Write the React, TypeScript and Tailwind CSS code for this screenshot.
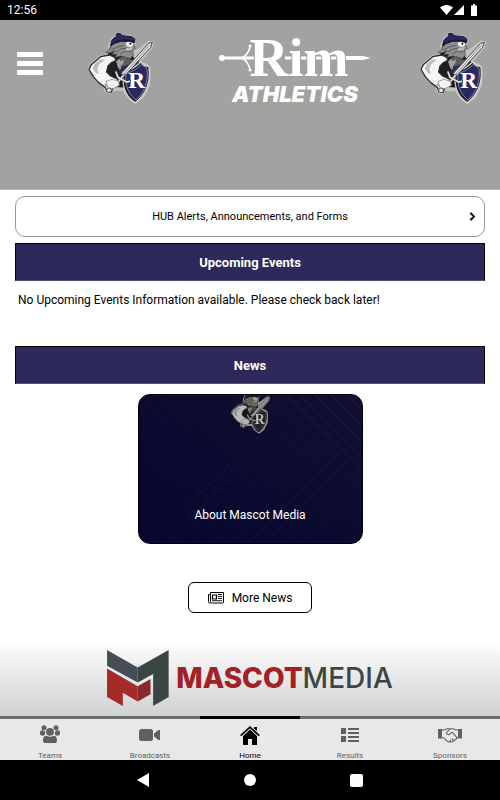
import type { ReactNode } from "react";
import { FaChevronRight } from "react-icons/fa";

function Mascot({ className }: { className: string }) {
  return (
    <svg viewBox="24 22 198 216" className={className} aria-hidden="true">
      {/* pale halo */}
      <g fill="#c2c2c0" stroke="#c2c2c0" strokeWidth="6" strokeLinejoin="round">
        <path d="M88 60 98 40 107 35 109 27 120 25 124 33 150 35 165 48 161 66 164 84 208 51 219 53 215 68 178 112 200 120 209 134 207 182 190 216 166 234 148 222 130 196 100 196 88 205 74 198 75 184 54 170 26 132 34 118 62 94 86 90Z" />
      </g>
      {/* torso */}
      <path
        d="M60 96 84 90 90 66 158 72 160 98 178 112 150 190 98 186 66 160Z"
        fill="#1b1b20"
      />
      <path d="M108 108 128 94 150 104 164 108 140 140 118 140Z" fill="#5c5c60" />
      <path d="M124 126 172 112 158 136 132 156 116 146Z" fill="#2b2a5c" />
      <path d="m108 112 10-10 4 8 10-6-2 12-8 8 2 10-10-4Z" fill="#a2a2a2" />
      {/* arm */}
      <path
        d="M62 96 88 91 105 98 107 108 94 114 84 124 80 142 92 154 114 164 118 182 98 190 94 202 80 200 76 188 56 174 40 156 27 134 34 120Z"
        fill="#f5f5f5"
        stroke="#303033"
        strokeWidth="4"
        strokeLinejoin="round"
      />
      <path d="M62 104 44 118 38 132 48 146 56 148 52 132 58 118 74 106Z" fill="#bdbdbd" />
      <path d="m74 178 10 8 12-2m-8 14 2-12" stroke="#8f8f8f" strokeWidth="4" fill="none" />
      <path d="M82 140 92 122 110 114 118 152 96 150Z" fill="#1f1f23" />
      {/* head and beard */}
      <path
        d="M96 56 90 72 78 84 92 84 104 78 96 90 110 88 106 98 124 94 150 102 160 92 158 76 166 72 158 50 128 44Z"
        fill="#8e8e8c"
        stroke="#4a4a4a"
        strokeWidth="2"
      />
      <path
        d="m94 76 20-10 20-4m-28 20 20-10 24-2m-30 18 16-8 18 2m-22 14 14 4"
        stroke="#5e5e5e"
        strokeWidth="3"
        fill="none"
      />
      <ellipse cx="149" cy="58" rx="11" ry="8" fill="#f8f8f8" />
      <circle cx="151" cy="57" r="3" fill="#111" />
      <path d="m138 70 20-3-2 8-18 4Z" fill="#bcbcba" />
      {/* bonnet */}
      <path
        d="M92 64 95 48 104 38 126 33 154 36 165 44 163 54 146 50 122 50 104 56Z"
        fill="#2b2a64"
        stroke="#14142c"
        strokeWidth="3"
      />
      <path d="M94 60C106 46 132 42 163 50" stroke="#14142c" strokeWidth="3" fill="none" />
      <ellipse cx="116" cy="31" rx="9" ry="7" fill="#26264f" />
      {/* shield */}
      <path
        d="M130 142C148 138 168 126 182 112L192 122 207 126C212 168 202 206 166 234 142 220 124 190 130 142Z"
        fill="#17171f"
        stroke="#d4d4d2"
        strokeWidth="4"
      />
      <path
        d="M138 146C156 142 172 132 184 119L201 131C205 168 196 200 168 226 146 210 134 184 138 146Z"
        fill="#2a2963"
        stroke="#bdbdc6"
        strokeWidth="2"
      />
      <text
        x="170"
        y="190"
        fontSize="70"
        textAnchor="middle"
        className="fill-white font-['Liberation_Serif'] font-bold"
      >
        R
      </text>
      {/* sword */}
      <path d="M217 53 206 56 124 146 132 156 212 68Z" fill="#e3e3e3" stroke="#4a4a4a" strokeWidth="3" />
      <path d="M208 62 132 148" stroke="#8d8d8d" strokeWidth="3" />
      <path
        d="m108 142 6 16 26 14 8-2m-18-18-20 26"
        stroke="#353537"
        strokeWidth="9"
        fill="none"
        strokeLinecap="round"
      />
      <path
        d="m108 142 6 16 26 14 8-2m-18-18-20 26"
        stroke="#e0e0e0"
        strokeWidth="5"
        fill="none"
        strokeLinecap="round"
      />
      <path
        d="M78 170 96 164 116 170 118 182 100 192 84 190Z"
        fill="#f3f3f3"
        stroke="#77777a"
        strokeWidth="2"
      />
      <circle cx="87" cy="197" r="7" fill="#e8e8e8" stroke="#555" strokeWidth="3" />
    </svg>
  );
}

function Wordmark() {
  return (
    <svg
      viewBox="0 -6 152 84"
      className="h-[84px] w-[152px]"
      role="img"
      aria-label="Rim Athletics"
    >
      <g fill="none" stroke="#fff">
        <circle cx="3" cy="26" r="2" fill="#fff" strokeWidth="2" />
        <path d="M5 26h32" strokeWidth="3" />
        <path d="M31 15c-1 5-3 8-8 11 5 3 7 6 8 12" strokeWidth="1.5" />
        <path d="M66 26h65" strokeWidth="3" />
      </g>
      <circle cx="31" cy="14" r="1.500" fill="#fff" />
      <circle cx="31" cy="38" r="1.500" fill="#fff" />
      <path d="M126 24h18l8 2-8 2h-18Z" fill="#fff" />
      <text
        x="80"
        y="44"
        fontSize="54"
        textAnchor="middle"
        stroke="#a2a2a0"
        strokeWidth="2"
        paintOrder="stroke"
        className="fill-white font-['Liberation_Serif'] font-bold"
      >
        Rim
      </text>
      <text
        x="76"
        y="70"
        fontSize="22"
        textAnchor="middle"
        className="fill-white font-['Inter'] font-black italic"
      >
        ATHLETICS
      </text>
    </svg>
  );
}

function StatusBar() {
  return (
    <div className="flex h-5 items-center justify-between bg-black pl-[7px] pr-[22px] text-white">
      <span className="text-xs">12:56</span>
      <svg viewBox="0 0 38 12" className="h-3 w-[38px]" fill="currentColor" aria-hidden="true">
        <path d="M0 3.500C4 0 9 0 13 3.500L6.500 11Z" />
        <path d="M24 1v10H14Z" />
        <path d="M31 1.500h2V0h2v1.500h2V12h-6Z" />
      </svg>
    </div>
  );
}

function SectionHeading({ children }: { children: string }) {
  return (
    <h2 className="flex h-[38px] items-center justify-center border border-black border-b-[#55537c] bg-[#2d2a5b] pt-0.5 text-[13px] font-bold text-white">
      {children}
    </h2>
  );
}

function NewspaperIcon() {
  return (
    <svg viewBox="0 0 16 12" className="h-3 w-4" fill="none" stroke="currentColor" aria-hidden="true">
      <path d="M2.500.5h13v9.500q0 1-1 1h-12M2.500 2.500h-2V9.500q0 1.500 1.200 1.500.8 0 .8-1.500V.5" />
      <path d="M4.500 3h4v4h-4z" strokeWidth="1.200" />
      <path d="M10 2.500h4M10 4.500h4M10 6.500h4M4 8.700h10" strokeWidth=".9" />
    </svg>
  );
}

function TeamsIcon() {
  return (
    <svg viewBox="0 0 20 20" className="h-5 w-5" fill="currentColor" aria-hidden="true">
      <circle cx="4" cy="2.800" r="2.500" />
      <circle cx="16" cy="2.800" r="2.500" />
      <circle cx="2.500" cy="8" r="2.700" />
      <circle cx="17.500" cy="8" r="2.700" />
      <circle cx="10" cy="6.800" r="3.900" />
      <path d="M3 16c0-3.500 1-5.300 3.500-5.300 2 1.300 5 1.300 7 0C16 10.700 17 12.500 17 16c0 1.500-1 2-2 2H5c-1 0-2-.5-2-2Z" />
    </svg>
  );
}

function VideoIcon() {
  return (
    <svg viewBox="0 0 22 14" className="h-3.5 w-[22px]" fill="currentColor" aria-hidden="true">
      <rect y="1" width="14" height="12" rx="2.500" />
      <path d="M15 5.500 19.500 2H21v10h-1.500L15 8.500Z" />
    </svg>
  );
}

function HomeIcon() {
  return (
    <svg viewBox="0 0 20 19" className="h-[19px] w-5" aria-hidden="true">
      <path d="M3 9.500 10 3l7 6.500V19h-5v-6H8v6H3Z" fill="currentColor" />
      <path d="M14 1h3v6l-3-3Z" fill="currentColor" />
      <path d="M.7 9.700 10 1.200l9.300 8.500" fill="none" stroke="#e8e8e8" strokeWidth="3.500" />
      <path d="M.7 9.700 10 1.200l9.300 8.500" fill="none" stroke="currentColor" strokeWidth="1.800" />
    </svg>
  );
}

function ResultsIcon() {
  return (
    <svg viewBox="0 0 18 14" className="h-3.5 w-[18px]" fill="currentColor" aria-hidden="true">
      <path d="M0 0h5v6H0zM0 8h5v6H0zM7 0h11v2H7zM7 4h11v2H7zM7 8h11v2H7zM7 12h11v2H7z" />
    </svg>
  );
}

function HandshakeIcon() {
  return (
    <svg viewBox="0 0 24 15" className="h-[15px] w-6" aria-hidden="true">
      <path d="M0 1h4v9.500H0zM20 1h4v9.500h-4z" fill="currentColor" />
      <path
        d="M4 2h2.500L9 .7h3M20 2h-2.500L15 .7h-2.500L9 4.200C8 6 10 7.500 11.700 6L14 4.200l4.500 5c.8 1-.2 2-1 2-.2 1.300-1.300 2-2.500 1.500-.8 1.300-2 1.500-3 1-1.500.5-2.500 0-3.500-1L5.500 9.700H4M18.500 9.700H20M13 13l-1-1M15.500 12l-1.500-1.500"
        fill="none"
        stroke="currentColor"
        strokeWidth="1.100"
      />
    </svg>
  );
}

const TABS: { label: string; icon: ReactNode; active?: boolean }[] = [
  { label: "Teams", icon: <TeamsIcon /> },
  { label: "Broadcasts", icon: <VideoIcon /> },
  { label: "Home", icon: <HomeIcon />, active: true },
  { label: "Results", icon: <ResultsIcon /> },
  { label: "Sponsors", icon: <HandshakeIcon /> },
];

export default function App() {
  return (
    <div className="flex min-h-screen flex-col bg-white font-['Roboto',sans-serif] text-black">
      <StatusBar />

      <header className="flex h-[170px] items-start border-b border-[#b5b5b3] bg-[#a2a2a0] pl-4 pr-3.5 pt-1.5">
        <button aria-label="Menu" className="mt-[26px] flex w-7 flex-col gap-1 px-px">
          <span className="h-[5px] w-full rounded-[1px] bg-white" />
          <span className="h-[5px] w-full rounded-[1px] bg-white" />
          <span className="h-[5px] w-full rounded-[1px] bg-white" />
        </button>
        <Mascot className="ml-11 mt-1.5 h-[72px] w-[66px]" />
        <div className="flex flex-1 justify-center pl-4">
          <Wordmark />
        </div>
        <Mascot className="mt-1.5 h-[72px] w-[66px]" />
      </header>

      <main className="flex flex-1 flex-col px-[15px] pt-1.5">
        <button className="flex h-[41px] items-center rounded-[10px] border border-[#999] pl-4 pr-[7px] text-[11px]">
          <span className="flex-1 pt-0.5">HUB Alerts, Announcements, and Forms</span>
          <FaChevronRight className="h-[9px] w-[9px]" stroke="currentColor" strokeWidth="40" />
        </button>

        <section className="mt-1.5">
          <SectionHeading>Upcoming Events</SectionHeading>
          <p className="px-[3px] pt-[9px] text-xs leading-5">
            No Upcoming Events Information available. Please check back later!
          </p>
        </section>

        <section className="mt-9 flex flex-col">
          <SectionHeading>News</SectionHeading>
          <a
            href="#about"
            className="relative mt-2.5 flex h-[150px] w-[225px] flex-col justify-end self-center overflow-hidden rounded-xl border border-black bg-linear-to-tr from-[#06062e] to-[#111033] pb-5 text-center text-xs leading-4 text-white"
          >
            <svg
              viewBox="0 0 225 150"
              className="absolute inset-0 h-full w-full"
              fill="none"
              stroke="#fff"
              aria-hidden="true"
            >
              <path
                d="M12 150 120 42M26 150 134 42M40 150 148 42M56 150 164 42M74 150 182 42M92 150 192 50M110 150 202 58M128 150 212 66M146 150 222 74M164 150 225 89"
                strokeOpacity=".06"
              />
              <path
                d="M0 0 88 88M18 0 96 78M36 0 104 68M54 0 112 58M0 18 80 98M0 36 70 106M0 54 62 116M0 72 54 126"
                strokeOpacity=".035"
              />
              <path d="M150 0 225 75M163 0 225 62M178 0 225 47M194 0 225 31M210 0 225 15" strokeOpacity=".08" />
            </svg>
            <div className="absolute inset-x-0 -top-1 flex justify-center">
              <Mascot className="h-[43px] w-[39px] brightness-75 grayscale" />
            </div>
            <span className="relative">About Mascot Media</span>
          </a>
          <button className="mb-[27px] mt-[38px] flex h-[31px] w-[124px] items-center justify-center gap-2 self-center rounded-md border border-black text-xs">
            <NewspaperIcon />
            More News
          </button>
        </section>
      </main>

      <a
        href="#sponsor"
        className="flex h-[76px] items-center justify-center gap-[7px] bg-linear-to-b from-white to-[#d0d1d3]"
      >
        <svg viewBox="54 42 188 170" className="h-14 w-[62px]" aria-hidden="true">
          <path d="M54 42 147 95V141L54 90Z" fill="#474d56" />
          <path d="M147 95 241 42V185L194 212V115L147 141Z" fill="#3b4644" />
          <path d="M54 98 147 152V198L102 172V212L54 185Z" fill="#a52a2a" />
          <path d="M147 152 186 130V176L147 198Z" fill="#8a282b" />
        </svg>
        <span className="font-['Inter'] text-[28px] leading-8 text-[#3b4644]">
          <b className="font-extrabold text-[#a32025]">MASCOT</b>
          <span className="font-medium">MEDIA</span>
        </span>
      </a>

      <nav className="grid h-11 grid-cols-5 bg-[#e8e8e8]">
        {TABS.map((tab) => (
          <a
            key={tab.label}
            href={`#${tab.label.toLowerCase()}`}
            className={
              tab.active
                ? "flex flex-col items-center border-t-3 border-black text-[8px] text-black"
                : "flex flex-col items-center border-t-3 border-[#6e6e6e] text-[8px] text-[#606060]"
            }
          >
            <span className="flex h-8 items-center">{tab.icon}</span>
            <span className="leading-[9px]">{tab.label}</span>
          </a>
        ))}
      </nav>

      <div className="flex h-10 items-center justify-center gap-[94px] bg-black text-white">
        <button aria-label="Back">
          <svg viewBox="0 0 13 14" className="h-3.5 w-[13px]" fill="currentColor">
            <path d="M12 0v14L0 7Z" />
          </svg>
        </button>
        <button aria-label="Home screen" className="h-3 w-3 rounded-full bg-white" />
        <button aria-label="Overview" className="h-[13px] w-[13px] rounded-xs bg-white" />
      </div>
    </div>
  );
}
